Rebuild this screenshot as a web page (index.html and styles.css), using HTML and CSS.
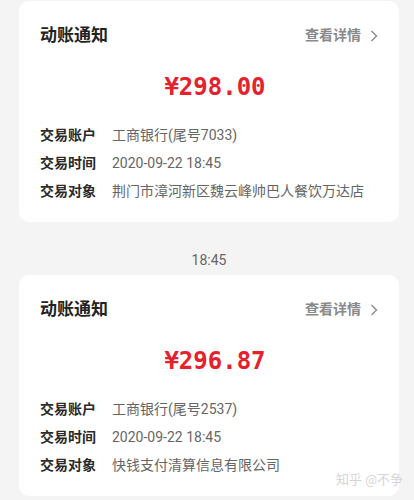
FILE: index.html
```html
<!doctype html>
<html>
  <head>
    <title>动账通知</title>
    <meta charset="UTF-8" />
    <meta name="viewport" content="width=device-width, initial-scale=1.0" />
    <link rel="stylesheet" href="styles.css">
  </head>

  <body>
    <div class="list">
      <div class="card">
        <div class="card-head">
          <span class="title">动账通知</span>
          <span class="more">查看详情
            <svg class="chevron" width="8" height="12" viewBox="0 0 8 12">
              <path d="M1.5 1l5 5-5 5" />
            </svg>
          </span>
        </div>
        <div class="amount">¥298.00</div>
        <div class="rows">
          <div class="row"><span class="label">交易账户</span><span class="value">工商银行(尾号7033)</span></div>
          <div class="row"><span class="label">交易时间</span><span class="value">2020-09-22 18:45</span></div>
          <div class="row"><span class="label">交易对象</span><span class="value">荆门市漳河新区魏云峰帅巴人餐饮万达店</span></div>
        </div>
      </div>

      <div class="time">18:45</div>

      <div class="card">
        <div class="card-head">
          <span class="title">动账通知</span>
          <span class="more">查看详情
            <svg class="chevron" width="8" height="12" viewBox="0 0 8 12">
              <path d="M1.5 1l5 5-5 5" />
            </svg>
          </span>
        </div>
        <div class="amount">¥296.87</div>
        <div class="rows">
          <div class="row"><span class="label">交易账户</span><span class="value">工商银行(尾号2537)</span></div>
          <div class="row"><span class="label">交易时间</span><span class="value">2020-09-22 18:45</span></div>
          <div class="row"><span class="label">交易对象</span><span class="value">快钱支付清算信息有限公司</span></div>
        </div>
      </div>
    </div>

    <div class="watermark">知乎 @不争</div>
  </body>
</html>
```

FILE: styles.css
```css
html,
body {
  margin: 0;
  padding: 0;
}
body {
  font: 400 14px/1.4 Roboto, 'Noto Sans CJK SC', sans-serif;
  -webkit-font-smoothing: antialiased;
  color: #333333;
  background-color: #f4f4f4;
  height: 500px;
  overflow: hidden;
  position: relative;
}
.list {
  padding: 1px 15px 0 19px;
}
.card {
  background-color: #ffffff;
  border-radius: 10px;
  padding: 24px 21px 17px 21px;
}
.card-head {
  display: flex;
  justify-content: space-between;
  align-items: center;
  height: 22px;
}
.title {
  font-size: 17px;
  font-weight: 700;
  color: #222222;
}
.more {
  display: flex;
  align-items: center;
  gap: 9px;
  font-size: 14px;
  font-weight: 700;
  color: #8a8a8a;
}
.chevron {
  fill: none;
  stroke: #8a8a8a;
  stroke-width: 1.4;
}
.amount {
  margin-top: 25px;
  padding-left: 12px;
  height: 30px;
  line-height: 30px;
  text-align: center;
  font-family: 'DejaVu Sans Mono', monospace;
  font-size: 24px;
  font-weight: 700;
  color: #e5212d;
}
.rows {
  margin-top: 19px;
}
.row {
  display: flex;
  gap: 16px;
  height: 28px;
  line-height: 28px;
}
.label {
  font-weight: 700;
  color: #2a2a2a;
}
.value {
  color: #666666;
}
.time {
  margin: 28px 0 5px 0;
  height: 20px;
  line-height: 20px;
  text-align: center;
  font-size: 14px;
  color: #666666;
}
.watermark {
  position: absolute;
  right: 11px;
  bottom: 11px;
  font-size: 13px;
  color: #d6d6d6;
  text-shadow: 0 0 1px #ffffff;
}
```
